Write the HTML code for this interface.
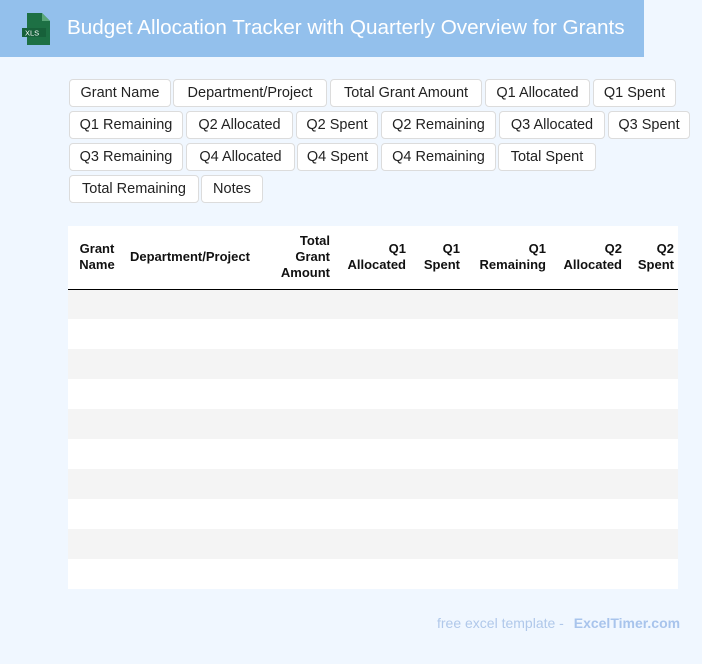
<!DOCTYPE html>
<html><head><style>
*{margin:0;padding:0;box-sizing:border-box}
body{width:702px;height:664px;background:#f0f7ff;font-family:"Liberation Sans",Arial,sans-serif;position:relative;overflow:hidden}
.hdr{position:absolute;left:0;top:0;width:644px;height:57px;background:#93c0ec}
.hdr h1{position:absolute;left:67px;top:16px;font-size:20.7px;font-weight:normal;color:#fff;white-space:nowrap}
.icon{position:absolute;left:20px;top:12px}
.tag{position:absolute;height:28px;line-height:26px;text-align:center;border:1px solid #dcdcdc;border-radius:4px;background:#fff;font-size:14.5px;color:#222;white-space:nowrap}
table{position:absolute;left:68px;top:226px;width:610px;border-collapse:collapse;background:#fff;table-layout:fixed}
th{font-size:13px;font-weight:bold;color:#111;text-align:right;padding:0 4px;height:63px;border-bottom:1.5px solid #000;line-height:16px;vertical-align:middle}
td{height:30px}
tr.g td{background:#f4f4f4}
.ft{position:absolute;left:437px;top:615px;font-size:14px;color:#b0c8ea}
.ft b{color:#a8c4ec;margin-left:6px}
</style></head><body>
<div class="hdr">
<svg class="icon" width="32" height="34" viewBox="0 0 32 34"><path d="M7 1h15l8 8v24H7z" fill="#1d7044"/><path d="M22 1v8h8z" fill="#5aa77a"/><rect x="2" y="16" width="24" height="9" fill="#17613a"/><text x="5" y="23.5" font-size="7.5" fill="#fff" font-family="Liberation Sans">XLS</text></svg>
<h1>Budget Allocation Tracker with Quarterly Overview for Grants</h1>
</div>
<span class="tag" style="left:69px;top:79px;width:102px">Grant Name</span>
<span class="tag" style="left:173px;top:79px;width:154px">Department/Project</span>
<span class="tag" style="left:330px;top:79px;width:152px">Total Grant Amount</span>
<span class="tag" style="left:485px;top:79px;width:105px">Q1 Allocated</span>
<span class="tag" style="left:593px;top:79px;width:83px">Q1 Spent</span>
<span class="tag" style="left:69px;top:111px;width:114px">Q1 Remaining</span>
<span class="tag" style="left:186px;top:111px;width:107px">Q2 Allocated</span>
<span class="tag" style="left:296px;top:111px;width:82px">Q2 Spent</span>
<span class="tag" style="left:381px;top:111px;width:115px">Q2 Remaining</span>
<span class="tag" style="left:499px;top:111px;width:106px">Q3 Allocated</span>
<span class="tag" style="left:608px;top:111px;width:82px">Q3 Spent</span>
<span class="tag" style="left:69px;top:143px;width:114px">Q3 Remaining</span>
<span class="tag" style="left:186px;top:143px;width:109px">Q4 Allocated</span>
<span class="tag" style="left:297px;top:143px;width:81px">Q4 Spent</span>
<span class="tag" style="left:381px;top:143px;width:115px">Q4 Remaining</span>
<span class="tag" style="left:498px;top:143px;width:98px">Total Spent</span>
<span class="tag" style="left:69px;top:175px;width:130px">Total Remaining</span>
<span class="tag" style="left:201px;top:175px;width:62px">Notes</span>
<table>
<colgroup><col style="width:58px"><col style="width:142px"><col style="width:66px"><col style="width:76px"><col style="width:54px"><col style="width:86px"><col style="width:76px"><col style="width:52px"></colgroup>
<tr><th style="text-align:center">Grant<br>Name</th><th style="text-align:left;padding-left:4px">Department/Project</th><th>Total<br>Grant<br>Amount</th><th>Q1<br>Allocated</th><th>Q1<br>Spent</th><th>Q1<br>Remaining</th><th>Q2<br>Allocated</th><th>Q2<br>Spent</th></tr>
<tr class="g"><td colspan="8"></td></tr><tr><td colspan="8"></td></tr>
<tr class="g"><td colspan="8"></td></tr><tr><td colspan="8"></td></tr>
<tr class="g"><td colspan="8"></td></tr><tr><td colspan="8"></td></tr>
<tr class="g"><td colspan="8"></td></tr><tr><td colspan="8"></td></tr>
<tr class="g"><td colspan="8"></td></tr><tr><td colspan="8"></td></tr>
</table>
<div class="ft">free excel template - <b>ExcelTimer.com</b></div>
</body></html>
